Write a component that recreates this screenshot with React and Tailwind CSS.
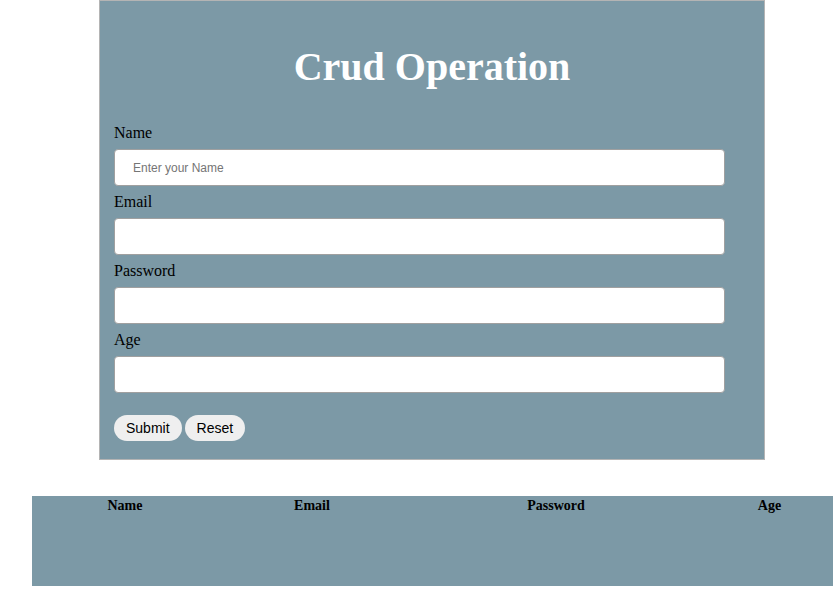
import React from 'react';

const fields = [
  { label: 'Name', placeholder: 'Enter your Name', type: 'text' },
  { label: 'Email', placeholder: '', type: 'email' },
  { label: 'Password', placeholder: '', type: 'password' },
  { label: 'Age', placeholder: '', type: 'number' },
];

const columns = [
  { title: 'Name', width: 'w-[186px]' },
  { title: 'Email', width: 'w-[188px]' },
  { title: 'Password', width: 'w-[300px]' },
  { title: 'Age', width: 'w-[127px]' },
];

export default function App() {
  return (
    <div className="min-h-[590px] w-[836px] bg-white font-['Liberation_Serif',serif] text-black">
      {/* Form card */}
      <div className="ml-[99px] w-[666px] border border-[#b4b4b4] bg-[#7c99a6] pt-[43px] pb-[18px]">
        <h1 className="text-center text-[40px] font-bold leading-[45px] text-white">Crud Operation</h1>

        <form className="mt-[35px] pl-[14px]" onSubmit={(e) => e.preventDefault()}>
          {fields.map((f, i) => (
            <div key={f.label} className={i === 0 ? '' : 'mt-[7px]'}>
              <label className="block text-[16px] leading-[18px]">{f.label}</label>
              <input
                type={f.type}
                placeholder={f.placeholder}
                className="mt-[7px] block h-[37px] w-[611px] rounded-[4px] border border-[#a0a0a0] bg-white pl-[18px] font-['Liberation_Sans',sans-serif] text-[12px] outline-none placeholder:text-[#757575]"
              />
            </div>
          ))}

          <div className="mt-[22px] flex gap-[3px]">
            <button type="submit" className="h-[26px] rounded-full bg-[#efefef] px-[12px] font-['Liberation_Sans',sans-serif] text-[14px] text-black">
              Submit
            </button>
            <button type="reset" className="h-[26px] rounded-full bg-[#efefef] px-[12px] font-['Liberation_Sans',sans-serif] text-[14px] text-black">
              Reset
            </button>
          </div>
        </form>
      </div>

      {/* Records table */}
      <div className="ml-[32px] mt-[36px] flex h-[90px] w-[801px] items-start bg-[#7c99a6] pt-[2px]">
        {columns.map((c) => (
          <div key={c.title} className={`${c.width} text-center text-[14px] font-bold leading-[16px]`}>
            {c.title}
          </div>
        ))}
      </div>
    </div>
  );
}
